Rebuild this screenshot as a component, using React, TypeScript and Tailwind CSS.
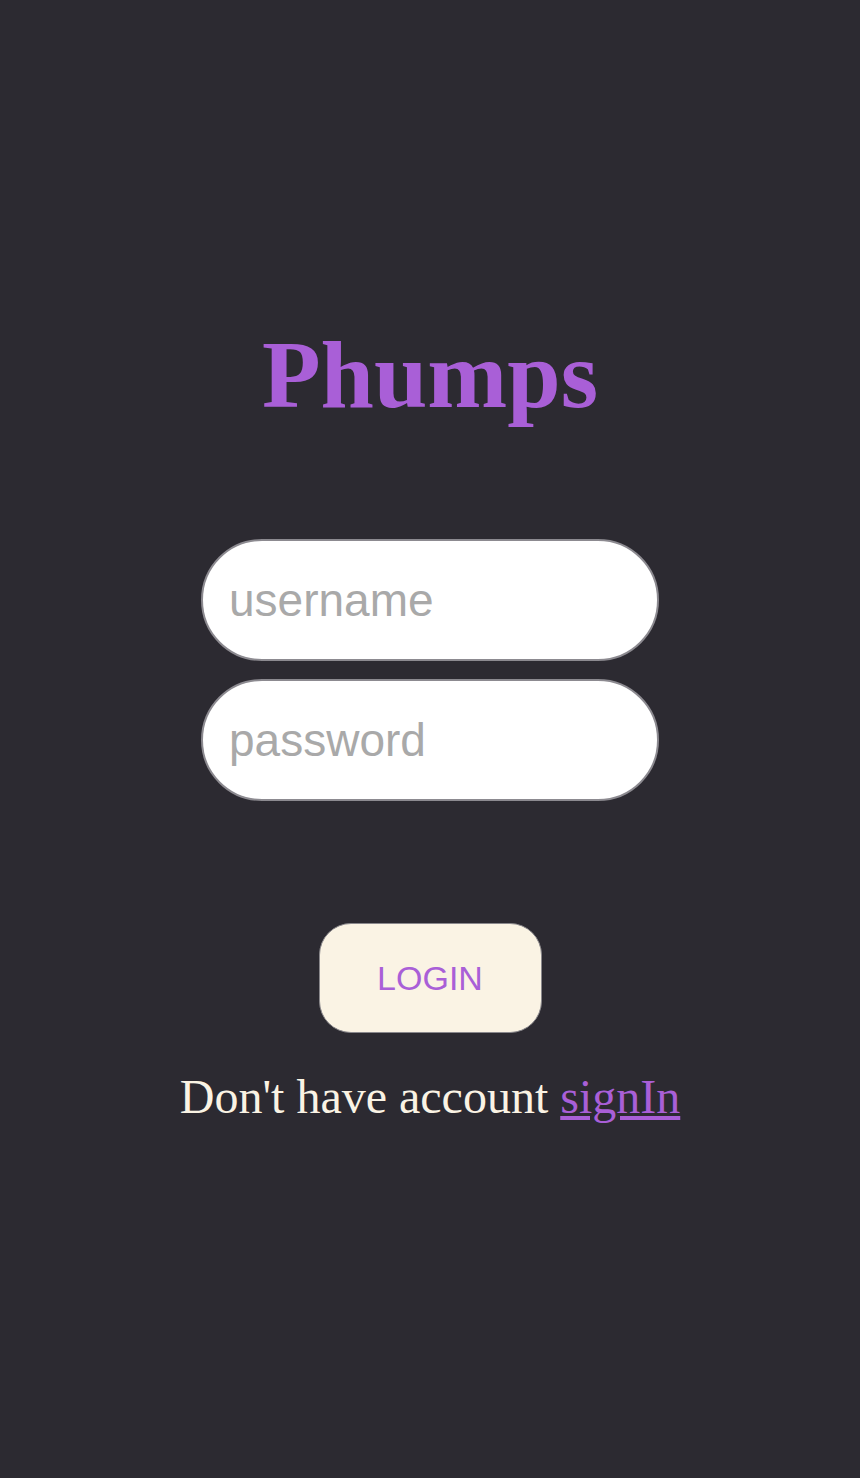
import React from "react";

export default function App() {
  return (
    <div className="min-h-[1478px] w-full bg-[#2c2a31] flex flex-col items-center pt-[327px]">
      <h1 className="m-0 font-['Liberation_Serif','Times_New_Roman',serif] text-[96px] leading-none font-bold text-[#a95fd7]">
        Phumps
      </h1>
      <div className="mt-[116px] flex flex-col gap-[18px]">
        <input
          type="text"
          placeholder="username"
          className="w-[458px] h-[122px] rounded-full bg-white border-2 border-[#8c8a90] pl-[26px] font-['Liberation_Sans',Arial,sans-serif] text-[46px] text-[#333] placeholder:text-[#a9a9a9] outline-none"
        />
        <input
          type="password"
          placeholder="password"
          className="w-[458px] h-[122px] rounded-full bg-white border-2 border-[#8c8a90] pl-[26px] font-['Liberation_Sans',Arial,sans-serif] text-[46px] text-[#333] placeholder:text-[#a9a9a9] outline-none"
        />
      </div>
      <button className="mt-[122px] w-[223px] h-[110px] rounded-[32px] bg-[#faf3e4] border border-[#8a888c] font-['Liberation_Sans',Arial,sans-serif] text-[34px] text-[#a95fd7]">
        LOGIN
      </button>
      <p className="mt-[40px] font-['Liberation_Serif','Times_New_Roman',serif] text-[48px] leading-none text-[#faf3e4]">
        Don't have account{" "}
        <a href="#" className="text-[#a95fd7] underline">
          signIn
        </a>
      </p>
    </div>
  );
}
